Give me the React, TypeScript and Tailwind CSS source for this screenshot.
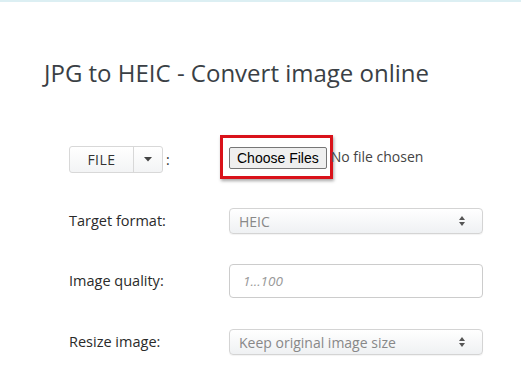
const label = "text-[14.5px] text-[#2a2a2a] w-[160px] shrink-0";
const selectBox =
  "flex items-center justify-between w-[254px] h-[26px] rounded-[4px] border border-[#d4d4d4] bg-gradient-to-b from-white to-[#eff1f3] px-[9px] text-[14px] text-[#888] shadow-[0_1px_1px_rgba(0,0,0,0.05)]";

const Arrows = () => (
  <svg width="8" height="12" viewBox="0 0 8 12" className="mr-[7px]">
    <path d="M4 1 L7 5 L1 5 Z" fill="#555" />
    <path d="M4 11 L7 7 L1 7 Z" fill="#555" />
  </svg>
);

export default function App() {
  return (
    <div
      className="w-[521px] h-[391px] bg-white overflow-hidden border-t-2 border-[#dcefF3]"
      style={{ fontFamily: "'Open Sans', sans-serif" }}
    >
      <h1 className="mt-[55px] ml-[44px] text-[24px] leading-[32px] text-[#3a3f45] font-normal">
        JPG to HEIC - Convert image online
      </h1>

      <div className="ml-[69px] mt-[50px] flex flex-col">
        <div className="flex items-center h-[40px]">
          <div className="flex items-center w-[160px] shrink-0">
            <div className="flex h-[27px] rounded-[3px] border border-[#d8d8d8] bg-gradient-to-b from-white to-[#f3f4f5] text-[14px] text-[#333]">
              <div className="w-[64px] flex items-center justify-center border-r border-[#d8d8d8] tracking-[0.5px]">
                FILE
              </div>
              <div className="w-[28px] flex items-center justify-center">
                <svg width="8" height="5" viewBox="0 0 8 5">
                  <path d="M0 0 L8 0 L4 4.5 Z" fill="#444" />
                </svg>
              </div>
            </div>
            <span className="ml-[3px] text-[14px] text-[#333]">:</span>
          </div>
          <div className="flex items-center mb-[5px]">
            <div className="-ml-[9px] py-[7px] pl-[6px] pr-[3px] border-[3px] border-[#d9121a] shadow-[1px_2px_3px_rgba(0,0,0,0.35)]">
              <button
                className="h-[22px] px-[7px] rounded-[2px] border border-[#767676] bg-[#efefef] text-[14px] text-black leading-none"
                style={{ fontFamily: "'Liberation Sans', Arial, sans-serif" }}
              >
                Choose Files
              </button>
            </div>
            <span className="text-[14px] text-[#444] -ml-[2px]">No file chosen</span>
          </div>
        </div>

        <div className="flex items-center mt-[29px]">
          <div className={label}>Target format:</div>
          <div className={selectBox}>
            <span>HEIC</span>
            <Arrows />
          </div>
        </div>

        <div className="flex items-center mt-[30px]">
          <div className={label}>Image quality:</div>
          <div className="flex items-center w-[254px] h-[34px] rounded-[4px] border border-[#ccc] bg-white px-[13px] text-[13.5px] italic text-[#999]">
            1...100
          </div>
        </div>

        <div className="flex items-center mt-[31px]">
          <div className={label}>Resize image:</div>
          <div className={selectBox}>
            <span>Keep original image size</span>
            <Arrows />
          </div>
        </div>
      </div>
    </div>
  );
}
